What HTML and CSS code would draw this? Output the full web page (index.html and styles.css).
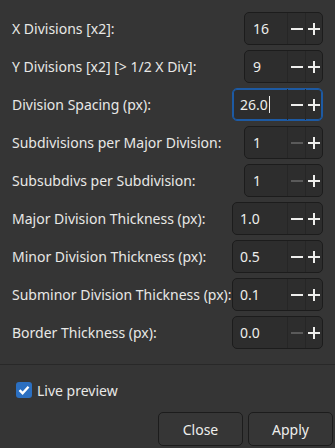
FILE: index.html
```html
<!DOCTYPE html>
<html lang="en">
<head>
  <meta charset="UTF-8">
  <meta name="viewport" content="width=device-width, initial-scale=1.0">
  <title>Grid Settings</title>
  <link rel="stylesheet" href="styles.css">
</head>
<body>
  <div class="dialog">
    <div class="fields">
      <div class="row"><span class="label">X Divisions [x2]:</span><div class="spin"><span class="value">16</span><span class="btn"><svg viewBox="0 0 12 12"><rect x="0" y="5" width="12" height="2"/></svg></span><span class="btn"><svg viewBox="0 0 12 12"><rect x="0" y="5" width="12" height="2"/><rect x="5" y="0" width="2" height="12"/></svg></span></div></div>
      <div class="row"><span class="label">Y Divisions [x2] [&gt; 1/2 X Div]:</span><div class="spin"><span class="value">9</span><span class="btn"><svg viewBox="0 0 12 12"><rect x="0" y="5" width="12" height="2"/></svg></span><span class="btn"><svg viewBox="0 0 12 12"><rect x="0" y="5" width="12" height="2"/><rect x="5" y="0" width="2" height="12"/></svg></span></div></div>
      <div class="row"><span class="label">Division Spacing (px):</span><div class="spin wide focus"><span class="value">26.0<i class="caret"></i></span><span class="btn"><svg viewBox="0 0 12 12"><rect x="0" y="5" width="12" height="2"/></svg></span><span class="btn"><svg viewBox="0 0 12 12"><rect x="0" y="5" width="12" height="2"/><rect x="5" y="0" width="2" height="12"/></svg></span></div></div>
      <div class="row"><span class="label">Subdivisions per Major Division:</span><div class="spin"><span class="value">1</span><span class="btn off"><svg viewBox="0 0 12 12"><rect x="0" y="5" width="12" height="2"/></svg></span><span class="btn"><svg viewBox="0 0 12 12"><rect x="0" y="5" width="12" height="2"/><rect x="5" y="0" width="2" height="12"/></svg></span></div></div>
      <div class="row"><span class="label">Subsubdivs per Subdivision:</span><div class="spin"><span class="value">1</span><span class="btn off"><svg viewBox="0 0 12 12"><rect x="0" y="5" width="12" height="2"/></svg></span><span class="btn"><svg viewBox="0 0 12 12"><rect x="0" y="5" width="12" height="2"/><rect x="5" y="0" width="2" height="12"/></svg></span></div></div>
      <div class="row"><span class="label">Major Division Thickness (px):</span><div class="spin wide"><span class="value">1.0</span><span class="btn"><svg viewBox="0 0 12 12"><rect x="0" y="5" width="12" height="2"/></svg></span><span class="btn"><svg viewBox="0 0 12 12"><rect x="0" y="5" width="12" height="2"/><rect x="5" y="0" width="2" height="12"/></svg></span></div></div>
      <div class="row"><span class="label">Minor Division Thickness (px):</span><div class="spin wide"><span class="value">0.5</span><span class="btn"><svg viewBox="0 0 12 12"><rect x="0" y="5" width="12" height="2"/></svg></span><span class="btn"><svg viewBox="0 0 12 12"><rect x="0" y="5" width="12" height="2"/><rect x="5" y="0" width="2" height="12"/></svg></span></div></div>
      <div class="row"><span class="label">Subminor Division Thickness (px):</span><div class="spin wide"><span class="value">0.1</span><span class="btn"><svg viewBox="0 0 12 12"><rect x="0" y="5" width="12" height="2"/></svg></span><span class="btn"><svg viewBox="0 0 12 12"><rect x="0" y="5" width="12" height="2"/><rect x="5" y="0" width="2" height="12"/></svg></span></div></div>
      <div class="row"><span class="label">Border Thickness (px):</span><div class="spin wide"><span class="value">0.0</span><span class="btn off"><svg viewBox="0 0 12 12"><rect x="0" y="5" width="12" height="2"/></svg></span><span class="btn"><svg viewBox="0 0 12 12"><rect x="0" y="5" width="12" height="2"/><rect x="5" y="0" width="2" height="12"/></svg></span></div></div>
    </div>
    <div class="separator"></div>
    <label class="check"><span class="box"><svg viewBox="0 0 16 16"><path d="M3.5 8.2 L6.6 11.2 L12.5 4.8" /></svg></span>Live preview</label>
    <div class="actions">
      <button>Close</button>
      <button>Apply</button>
    </div>
  </div>
</body>
</html>
```

FILE: styles.css
```css
* { box-sizing: border-box; margin: 0; padding: 0; }
body { background-color: #353535; color: #e8e8e6; font-family: "Noto Sans", sans-serif; font-size: 14px; }
.dialog { width: 335px; height: 448px; display: flex; flex-direction: column; }
.fields { display: flex; flex-direction: column; gap: 5px; padding: 12px 12px 0 12px; }
.row { display: flex; justify-content: space-between; align-items: center; height: 33px; }
.label { white-space: nowrap; }
.spin { display: flex; width: 79px; height: 33px; background-color: #2d2d2d; border: 1px solid #1c1c1c; border-radius: 5px; }
.spin.wide { width: 91px; }
.spin.focus { border-color: #1d5aa3; box-shadow: inset 0 0 0 1px #1d5aa3; }
.value { flex: 1; display: flex; align-items: center; padding-left: 7px; color: #eeeeec; }
.spin:not(.wide) .value { padding-left: 8px; }
.caret { display: inline-block; width: 1px; height: 17px; background-color: #eeeeec; margin-left: 1px; }
.btn { display: flex; align-items: center; justify-content: center; width: 18px; border-left: 1px solid #262626; }
.btn:last-child { width: 17px; }
.btn svg { width: 12px; height: 12px; fill: #eeeeec; }
.btn.off svg { fill: #5a5a5a; }
.separator { height: 1px; background-color: #282828; margin-top: 15px; }
.check { display: flex; align-items: center; gap: 5px; margin: 17px 0 0 16px; height: 16px; }
.box { width: 16px; height: 16px; border-radius: 3px; background-color: #2b6fc1; display: flex; align-items: center; justify-content: center; }
.box svg { width: 16px; height: 16px; fill: none; stroke: #ffffff; stroke-width: 2.4; }
.actions { display: flex; justify-content: flex-end; gap: 5px; padding: 14px 2px 0 0; }
.actions button { width: 85px; height: 34px; background-color: #363636; color: #eeeeec; border: 1px solid #1c1c1c; border-radius: 5px; font-family: "Noto Sans", sans-serif; font-size: 14px; }
```
